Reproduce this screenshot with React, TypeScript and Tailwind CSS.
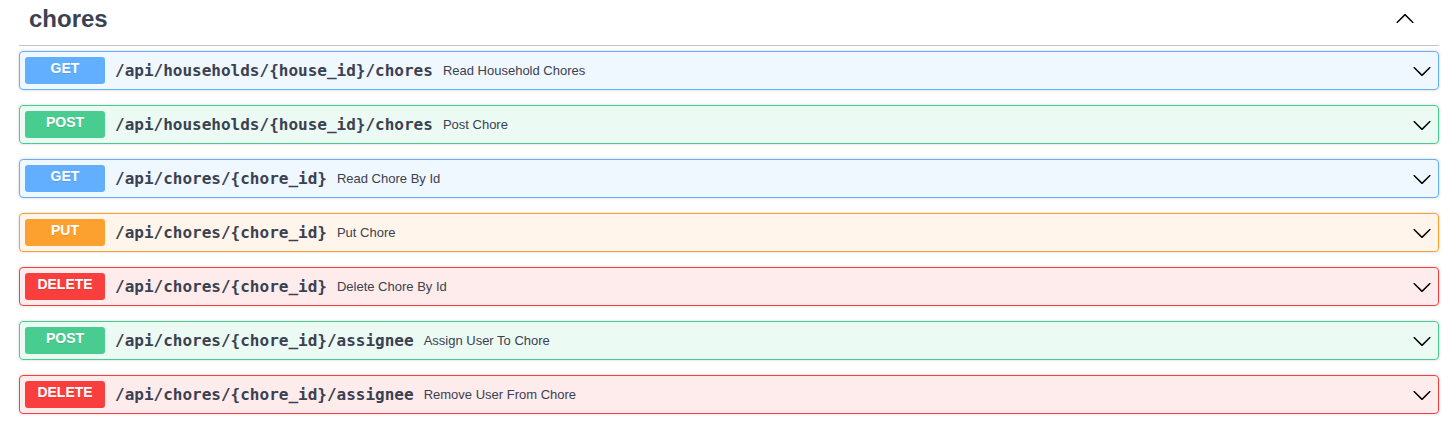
import React from 'react';

type Method = 'GET' | 'POST' | 'PUT' | 'DELETE';

const styles: Record<Method, { row: string; badge: string }> = {
  GET: { row: 'border-[#61affe] bg-[#61affe]/10', badge: 'bg-[#61affe]' },
  POST: { row: 'border-[#49cc90] bg-[#49cc90]/10', badge: 'bg-[#49cc90]' },
  PUT: { row: 'border-[#fca130] bg-[#fca130]/10', badge: 'bg-[#fca130]' },
  DELETE: { row: 'border-[#f93e3e] bg-[#f93e3e]/10', badge: 'bg-[#f93e3e]' },
};

const ops: { method: Method; path: string; summary: string }[] = [
  { method: 'GET', path: '/api/households/{house_id}/chores', summary: 'Read Household Chores' },
  { method: 'POST', path: '/api/households/{house_id}/chores', summary: 'Post Chore' },
  { method: 'GET', path: '/api/chores/{chore_id}', summary: 'Read Chore By Id' },
  { method: 'PUT', path: '/api/chores/{chore_id}', summary: 'Put Chore' },
  { method: 'DELETE', path: '/api/chores/{chore_id}', summary: 'Delete Chore By Id' },
  { method: 'POST', path: '/api/chores/{chore_id}/assignee', summary: 'Assign User To Chore' },
  { method: 'DELETE', path: '/api/chores/{chore_id}/assignee', summary: 'Remove User From Chore' },
];

const Arrow = ({ up = false }: { up?: boolean }) => (
  <svg
    width="20"
    height="20"
    viewBox="0 0 20 20"
    className={up ? 'rotate-180' : ''}
    aria-hidden="true"
  >
    <path
      fill="#000"
      d="M17.418 6.109c.272-.268.709-.268.979 0s.271.701 0 .969l-7.908 7.83c-.27.268-.707.268-.979 0l-7.908-7.83c-.27-.268-.27-.701 0-.969.271-.268.709-.268.979 0L10 13.25l7.418-7.141z"
    />
  </svg>
);

const OpBlock = ({ method, path, summary }: { method: Method; path: string; summary: string }) => {
  const s = styles[method];
  return (
    <div className={`mb-[15px] rounded-[4px] border shadow-[0_0_3px_rgba(0,0,0,0.19)] ${s.row}`}>
      <div className="flex items-center p-[5px]">
        <span
          className={`flex h-[27px] min-w-[80px] items-center justify-center rounded-[3px] pb-[4px] text-[14px] font-bold text-white [text-shadow:0_1px_0_rgba(0,0,0,0.1)] ${s.badge}`}
          style={{ fontFamily: '"Liberation Sans", Arial, sans-serif' }}
        >
          {method}
        </span>
        <span
          className="px-[10px] text-[16px] font-bold text-[#3b4151]"
          style={{ fontFamily: '"DejaVu Sans Mono", "Liberation Mono", monospace' }}
        >
          {path}
        </span>
        <span className="flex-1 text-[13px] text-[#3b4151]">{summary}</span>
        <span className="flex items-center pr-[1px]">
          <Arrow />
        </span>
      </div>
    </div>
  );
};

export default function App() {
  return (
    <div
      className="min-h-screen bg-white pl-[19px] pr-[15px]"
      style={{ fontFamily: '"Liberation Sans", Arial, sans-serif' }}
    >
      <div className="mb-[5px] flex items-center border-b border-[#3b4151]/30 pb-[10px] pl-[10px] pr-[24px] pt-[3px]">
        <h3 className="flex-1 text-[24px] font-bold leading-[32px] text-[#3b4151]">chores</h3>
        <Arrow up />
      </div>
      <div>
        {ops.map((op, i) => (
          <OpBlock key={i} {...op} />
        ))}
      </div>
    </div>
  );
}
